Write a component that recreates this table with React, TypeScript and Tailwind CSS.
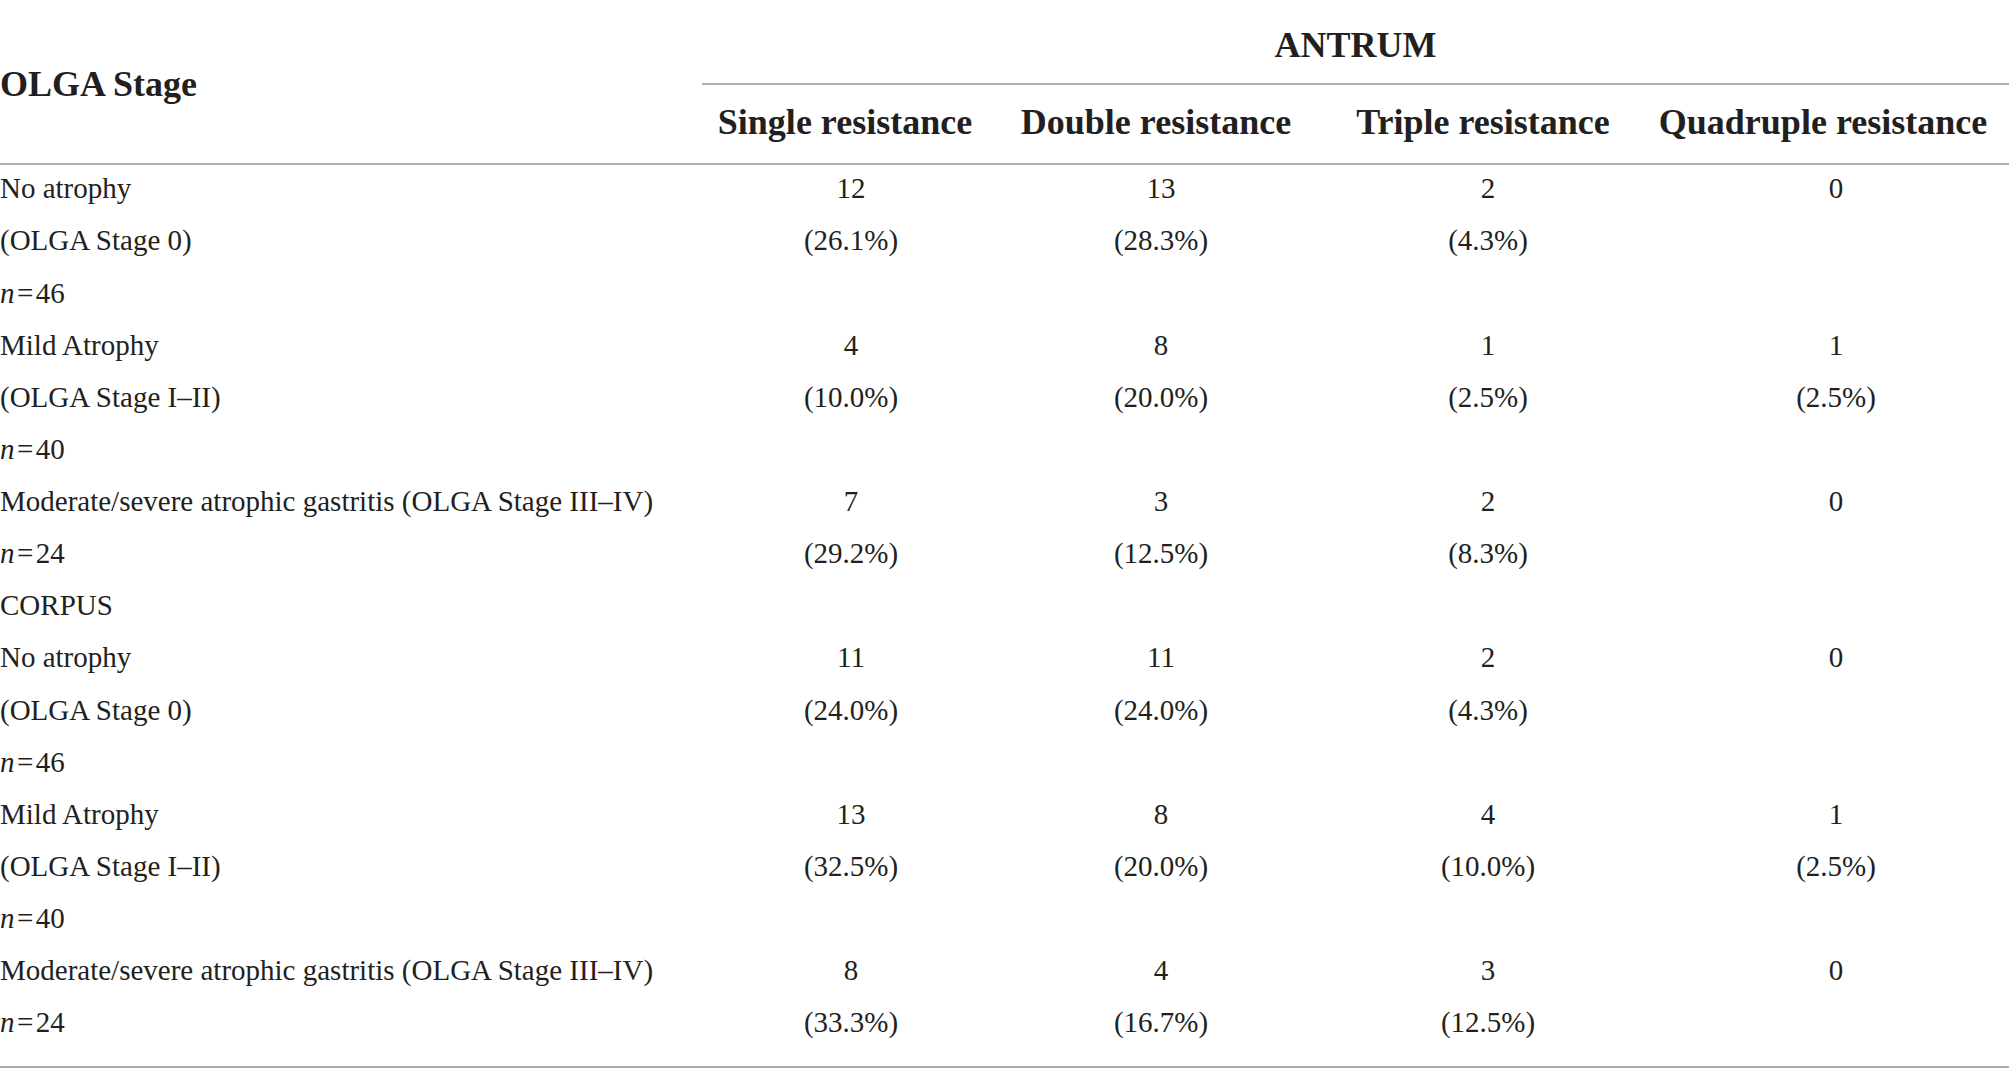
import React from 'react';

type Row = { label: React.ReactNode; cells: string[] };

const N = ({ v }: { v: string }) => (
    <span>
        <i>n</i>
        {'\u200A=\u200A'}
        {v}
    </span>
);

const rows: Row[] = [
    { label: 'No atrophy', cells: ['12', '13', '2', '0'] },
    { label: '(OLGA Stage 0)', cells: ['(26.1%)', '(28.3%)', '(4.3%)', ''] },
    { label: <N v="46" />, cells: ['', '', '', ''] },
    { label: 'Mild Atrophy', cells: ['4', '8', '1', '1'] },
    { label: '(OLGA Stage I–II)', cells: ['(10.0%)', '(20.0%)', '(2.5%)', '(2.5%)'] },
    { label: <N v="40" />, cells: ['', '', '', ''] },
    { label: 'Moderate/severe atrophic gastritis (OLGA Stage III–IV)', cells: ['7', '3', '2', '0'] },
    { label: <N v="24" />, cells: ['(29.2%)', '(12.5%)', '(8.3%)', ''] },
    { label: 'CORPUS', cells: ['', '', '', ''] },
    { label: 'No atrophy', cells: ['11', '11', '2', '0'] },
    { label: '(OLGA Stage 0)', cells: ['(24.0%)', '(24.0%)', '(4.3%)', ''] },
    { label: <N v="46" />, cells: ['', '', '', ''] },
    { label: 'Mild Atrophy', cells: ['13', '8', '4', '1'] },
    { label: '(OLGA Stage I–II)', cells: ['(32.5%)', '(20.0%)', '(10.0%)', '(2.5%)'] },
    { label: <N v="40" />, cells: ['', '', '', ''] },
    { label: 'Moderate/severe atrophic gastritis (OLGA Stage III–IV)', cells: ['8', '4', '3', '0'] },
    { label: <N v="24" />, cells: ['(33.3%)', '(16.7%)', '(12.5%)', ''] },
];

// header labels sit a little left of the data columns in the source
const heads = [
    { t: 'Single resistance', pad: 'pr-[12px]' },
    { t: 'Double resistance', pad: 'pr-[10px]' },
    { t: 'Triple resistance', pad: 'pr-[10px]' },
    { t: 'Quadruple resistance', pad: 'pr-[26px]' },
];

const cols = 'grid grid-cols-[702px_298px_322px_332px_364px]';

export default function App() {
    return (
        <div
            className="w-[2009px] h-[1086px] bg-white text-[#231f20] overflow-hidden"
            style={{ fontFamily: '"Liberation Serif", "Times New Roman", serif' }}
        >
            {/* Header */}
            <div className={`${cols} grid-rows-[85px_78px] border-b-2 border-[#b0b0b0]`}>
                <div className="row-span-2 flex items-center text-[36px] font-bold pt-1">OLGA Stage</div>
                <div className="col-span-4 flex items-center justify-center text-[36px] font-bold border-b-2 border-[#b0b0b0] pr-[9px] pt-[7px]">
                    ANTRUM
                </div>
                {heads.map((h) => (
                    <div key={h.t} className={`flex items-center justify-center text-[36px] font-bold whitespace-nowrap pb-[5px] ${h.pad}`}>
                        {h.t}
                    </div>
                ))}
            </div>

            {/* Body */}
            <div className="pb-[15px] border-b-2 border-[#ababab]">
                {rows.map((r, i) => (
                    <div key={i} className={`${cols} h-[52.13px] items-center text-[29px] pb-[4px]`}>
                        <div className="whitespace-nowrap">{r.label}</div>
                        {r.cells.map((c, j) => (
                            <div key={j} className="text-center">
                                {c}
                            </div>
                        ))}
                    </div>
                ))}
            </div>
        </div>
    );
}
